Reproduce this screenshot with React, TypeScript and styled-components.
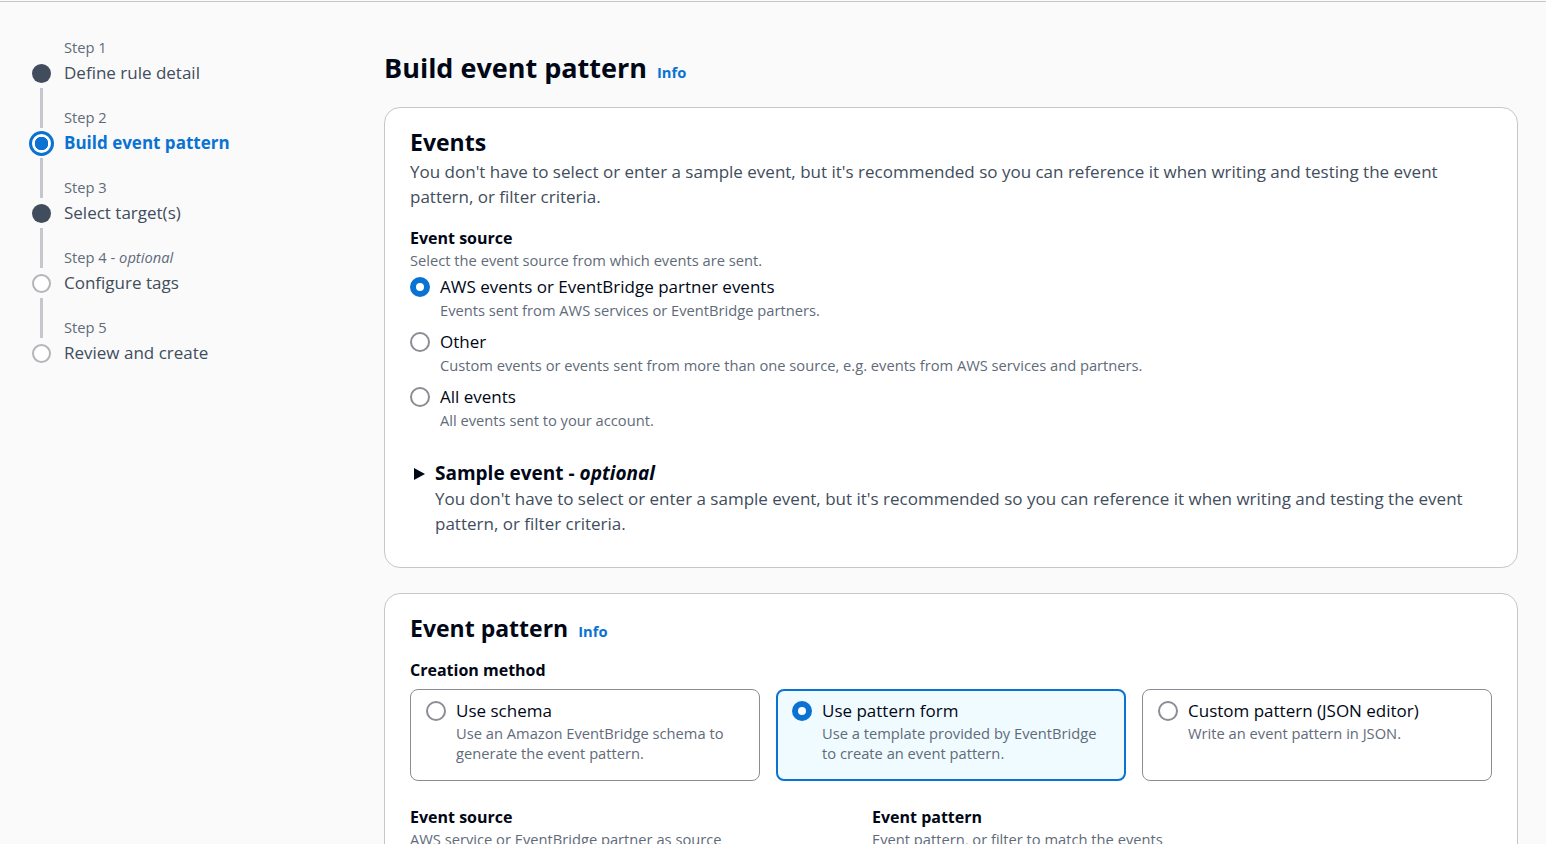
import React from "react";
import styled, { createGlobalStyle, css } from "styled-components";

const GlobalStyle = createGlobalStyle`
  * { box-sizing: border-box; }
  html, body { margin: 0; padding: 0; }
  body {
    background: #fafafa;
    font-family: "Open Sans", "Noto Sans", "Liberation Sans", Arial, sans-serif;
    color: #000716;
    width: 1546px;
    height: 844px;
    overflow: hidden;
  }
`;

const TopRule = styled.div`
  height: 1px;
  margin-top: 1px;
  background: #c6c6cd;
`;

const Layout = styled.div`
  display: grid;
  grid-template-columns: 384px 1fr;
  padding-right: 28px;
`;

const Sidebar = styled.nav`
  padding: 33px 0 0 28px;
`;

const StepList = styled.ol`
  list-style: none;
  margin: 0;
  padding: 0;
`;

const Step = styled.li`
  display: grid;
  grid-template-columns: 26px 1fr;
  grid-template-rows: 26px 24px 20px;
  column-gap: 10px;
`;

const LineCell = styled.div<{ $row: number; $hidden?: boolean }>`
  grid-column: 1;
  grid-row: ${(p) => p.$row};
  display: flex;
  justify-content: center;
  padding: ${(p) => (p.$row === 1 ? "0 0 3px" : "3px 0 0")};
  &::before {
    content: "";
    display: block;
    width: 3px;
    height: 100%;
    background: ${(p) => (p.$hidden ? "transparent" : "#c6c6cd")};
  }
`;

const DotCell = styled.div`
  grid-column: 1;
  grid-row: 2;
  display: flex;
  align-items: center;
  justify-content: center;
`;

const Dot = styled.span<{ $kind: "done" | "current" | "todo" }>`
  display: block;
  border-radius: 50%;
  ${(p) =>
    p.$kind === "done" &&
    css`
      width: 19px;
      height: 19px;
      background: #414d5c;
    `}
  ${(p) =>
    p.$kind === "todo" &&
    css`
      width: 19px;
      height: 19px;
      background: #fff;
      border: 2.5px solid #b4b4bb;
    `}
  ${(p) =>
    p.$kind === "current" &&
    css`
      width: 25px;
      height: 25px;
      border: 3px solid #0972d3;
      background: radial-gradient(circle, #0972d3 0 6.5px, #fff 7px);
    `}
`;

const StepLabel = styled.div`
  grid-column: 2;
  grid-row: 1;
  align-self: end;
  padding-bottom: 4px;
  font-size: 14.7px;
  line-height: 20px;
  color: #5f6b7a;
  em {
    font-style: italic;
  }
`;

const StepTitle = styled.div<{ $current?: boolean }>`
  grid-column: 2;
  grid-row: 2;
  align-self: center;
  font-size: 17px;
  line-height: 24px;
  color: ${(p) => (p.$current ? "#0972d3" : "#414d5c")};
  font-weight: ${(p) => (p.$current ? 700 : 400)};
`;

const Main = styled.main`
  padding-top: 47px;
  display: flex;
  flex-direction: column;
`;

const PageTitleRow = styled.div`
  display: flex;
  align-items: baseline;
  gap: 10px;
  margin-bottom: 20px;
`;

const PageTitle = styled.h1`
  margin: 0;
  font-size: 27px;
  line-height: 38px;
  font-weight: 700;
  color: #000716;
`;

const InfoLink = styled.a`
  font-size: 14.7px;
  font-weight: 700;
  color: #0972d3;
  text-decoration: none;
`;

const Card = styled.section`
  background: #fff;
  border: 1px solid #c6c6cd;
  border-radius: 16px;
  padding: 19px 25px 31px;
  & + & {
    margin-top: 25px;
  }
`;

const CardHeaderRow = styled.div`
  display: flex;
  align-items: baseline;
  gap: 10px;
`;

const CardTitle = styled.h2`
  margin: 0;
  font-size: 23px;
  line-height: 30px;
  font-weight: 700;
  color: #000716;
`;

const Paragraph = styled.p`
  margin: 2px 0 0;
  font-size: 17px;
  line-height: 25px;
  color: #414d5c;
`;

const FieldLabel = styled.div<{ $top: number }>`
  margin-top: ${(p) => p.$top}px;
  font-size: 16px;
  line-height: 22px;
  font-weight: 700;
  color: #000716;
`;

const FieldHint = styled.div`
  font-size: 14.7px;
  line-height: 22px;
  color: #5f6b7a;
`;

const RadioGroup = styled.div`
  display: flex;
  flex-direction: column;
  gap: 9px;
  margin-top: 4px;
`;

const RadioOption = styled.label`
  display: grid;
  grid-template-columns: 20px 1fr;
  column-gap: 10px;
  cursor: pointer;
`;

const RadioCircle = styled.span<{ $checked?: boolean }>`
  grid-column: 1;
  grid-row: 1;
  align-self: center;
  width: 20px;
  height: 20px;
  border-radius: 50%;
  background: #fff;
  border: ${(p) => (p.$checked ? "6.5px solid #0972d3" : "2px solid #8c8c94")};
`;

const RadioText = styled.span`
  grid-column: 2;
  grid-row: 1;
  font-size: 17px;
  line-height: 24px;
  color: #000716;
`;

const RadioDesc = styled.span`
  grid-column: 2;
  grid-row: 2;
  font-size: 14.7px;
  line-height: 22px;
  color: #5f6b7a;
`;

const TileDesc = styled(RadioDesc)`
  line-height: 20px;
`;

const Expander = styled.div`
  margin-top: 30px;
  display: grid;
  grid-template-columns: 15px 1fr;
  column-gap: 10px;
`;

const ExpanderIcon = styled.svg`
  grid-column: 1;
  grid-row: 1;
  align-self: center;
  justify-self: end;
  width: 11px;
  height: 12px;
`;

const ExpanderTitle = styled.div`
  grid-column: 2;
  grid-row: 1;
  font-size: 19px;
  line-height: 25px;
  font-weight: 700;
  color: #000716;
  em {
    font-style: italic;
  }
`;

const ExpanderDesc = styled.div`
  grid-column: 2;
  grid-row: 2;
  font-size: 17px;
  line-height: 25px;
  color: #414d5c;
`;

const TileRow = styled.div`
  display: grid;
  grid-template-columns: repeat(3, 1fr);
  gap: 16px;
  margin-top: 8px;
`;

const Tile = styled.label<{ $selected?: boolean }>`
  height: 92px;
  border-radius: 8px;
  display: grid;
  grid-template-columns: 20px 1fr;
  grid-template-rows: 24px auto;
  align-content: start;
  column-gap: 10px;
  ${(p) =>
    p.$selected
      ? css`
          border: 2px solid #0972d3;
          background: #f0fbff;
          padding: 8px 20px 0 14px;
        `
      : css`
          border: 1px solid #8c8c94;
          background: #fff;
          padding: 9px 21px 0 15px;
        `}
`;

const Columns = styled.div`
  display: grid;
  grid-template-columns: 446px 1fr;
  column-gap: 16px;
`;

const steps = [
  { label: "Step 1", title: "Define rule detail", kind: "done" as const },
  { label: "Step 2", title: "Build event pattern", kind: "current" as const },
  { label: "Step 3", title: "Select target(s)", kind: "done" as const },
  { label: "Step 4", optional: true, title: "Configure tags", kind: "todo" as const },
  { label: "Step 5", title: "Review and create", kind: "todo" as const },
];

const sources = [
  {
    title: "AWS events or EventBridge partner events",
    desc: "Events sent from AWS services or EventBridge partners.",
    checked: true,
  },
  {
    title: "Other",
    desc: "Custom events or events sent from more than one source, e.g. events from AWS services and partners.",
  },
  { title: "All events", desc: "All events sent to your account." },
];

const methods = [
  {
    title: "Use schema",
    desc: "Use an Amazon EventBridge schema to generate the event pattern.",
  },
  {
    title: "Use pattern form",
    desc: "Use a template provided by EventBridge to create an event pattern.",
    selected: true,
  },
  { title: "Custom pattern (JSON editor)", desc: "Write an event pattern in JSON." },
];

const sampleText =
  "You don't have to select or enter a sample event, but it's recommended so you can reference it when writing and testing the event pattern, or filter criteria.";

export default function App() {
  return (
    <>
      <GlobalStyle />
      <TopRule />
      <Layout>
        <Sidebar>
          <StepList>
            {steps.map((s, i) => (
              <Step key={s.label}>
                <LineCell $row={1} $hidden={i === 0} />
                <DotCell>
                  <Dot $kind={s.kind} />
                </DotCell>
                <LineCell $row={3} $hidden={i === steps.length - 1} />
                <StepLabel>
                  {s.label}
                  {s.optional && (
                    <>
                      {" - "}
                      <em>optional</em>
                    </>
                  )}
                </StepLabel>
                <StepTitle $current={s.kind === "current"}>{s.title}</StepTitle>
              </Step>
            ))}
          </StepList>
        </Sidebar>
        <Main>
          <PageTitleRow>
            <PageTitle>Build event pattern</PageTitle>
            <InfoLink href="#">Info</InfoLink>
          </PageTitleRow>

          <Card>
            <CardTitle>Events</CardTitle>
            <Paragraph>{sampleText}</Paragraph>
            <FieldLabel $top={18}>Event source</FieldLabel>
            <FieldHint>Select the event source from which events are sent.</FieldHint>
            <RadioGroup>
              {sources.map((o) => (
                <RadioOption key={o.title}>
                  <RadioCircle $checked={o.checked} />
                  <RadioText>{o.title}</RadioText>
                  <RadioDesc>{o.desc}</RadioDesc>
                </RadioOption>
              ))}
            </RadioGroup>
            <Expander>
              <ExpanderIcon viewBox="0 0 11 12">
                <path d="M0 0 L11 6 L0 12 Z" fill="#000716" />
              </ExpanderIcon>
              <ExpanderTitle>
                Sample event - <em>optional</em>
              </ExpanderTitle>
              <ExpanderDesc>{sampleText}</ExpanderDesc>
            </Expander>
          </Card>

          <Card>
            <CardHeaderRow>
              <CardTitle>Event pattern</CardTitle>
              <InfoLink href="#">Info</InfoLink>
            </CardHeaderRow>
            <FieldLabel $top={16}>Creation method</FieldLabel>
            <TileRow>
              {methods.map((m) => (
                <Tile key={m.title} $selected={m.selected}>
                  <RadioCircle $checked={m.selected} />
                  <RadioText>{m.title}</RadioText>
                  <TileDesc>{m.desc}</TileDesc>
                </Tile>
              ))}
            </TileRow>
            <Columns>
              <div>
                <FieldLabel $top={25}>Event source</FieldLabel>
                <FieldHint>AWS service or EventBridge partner as source</FieldHint>
              </div>
              <div>
                <FieldLabel $top={25}>Event pattern</FieldLabel>
                <FieldHint>Event pattern, or filter to match the events</FieldHint>
              </div>
            </Columns>
          </Card>
        </Main>
      </Layout>
    </>
  );
}
